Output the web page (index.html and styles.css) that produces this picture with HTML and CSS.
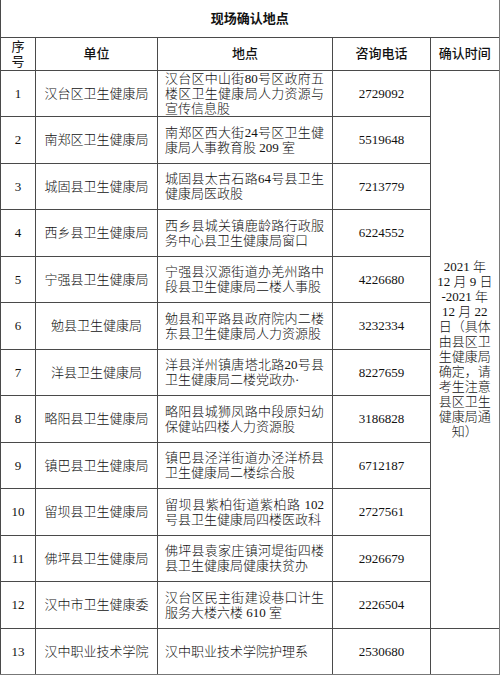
FILE: index.html
```html
<!DOCTYPE html>
<html lang="zh-CN">
<head>
<meta charset="utf-8">
<title>现场确认地点</title>
<link rel="stylesheet" href="styles.css">
</head>
<body>
<table class="sheet">
  <colgroup>
    <col class="c-no">
    <col class="c-unit">
    <col class="c-addr">
    <col class="c-tel">
    <col class="c-time">
  </colgroup>
  <thead>
    <tr class="title-row"><th colspan="5" class="title edge">现场确认地点</th></tr>
    <tr class="head-row">
      <th class="no">序<br>号</th>
      <th>单位</th>
      <th>地点</th>
      <th>咨询电话</th>
      <th class="edge">确认时间</th>
    </tr>
  </thead>
  <tbody>
    <tr>
      <td>1</td>
      <td class="unit">汉台区卫生健康局</td>
      <td class="addr"><span class="line full">汉台区中山街80号区政府五</span><span class="line full">楼区卫生健康局人力资源与</span><span class="line">宣传信息股</span></td>
      <td>2729092</td>
      <td class="time edge" rowspan="12">2021 年<br>12 月 9 日<br>-2021 年<br>12 月 22<br>日（具体<br>由县区卫<br>生健康局<br>确定，请<br>考生注意<br>县区卫生<br>健康局通<br>知）</td>
    </tr>
    <tr>
      <td>2</td>
      <td class="unit">南郑区卫生健康局</td>
      <td class="addr"><span class="line full">南郑区西大街24号区卫生健</span><span class="line">康局人事教育股 209 室</span></td>
      <td>5519648</td>
    </tr>
    <tr>
      <td>3</td>
      <td class="unit">城固县卫生健康局</td>
      <td class="addr"><span class="line full">城固县太古石路64号县卫生</span><span class="line">健康局医政股</span></td>
      <td>7213779</td>
    </tr>
    <tr>
      <td>4</td>
      <td class="unit">西乡县卫生健康局</td>
      <td class="addr"><span class="line full">西乡县城关镇鹿龄路行政服</span><span class="line">务中心县卫生健康局窗口</span></td>
      <td>6224552</td>
    </tr>
    <tr>
      <td>5</td>
      <td class="unit">宁强县卫生健康局</td>
      <td class="addr"><span class="line full">宁强县汉源街道办羌州路中</span><span class="line">段县卫生健康局二楼人事股</span></td>
      <td>4226680</td>
    </tr>
    <tr>
      <td>6</td>
      <td class="unit">勉县卫生健康局</td>
      <td class="addr"><span class="line full">勉县和平路县政府院内二楼</span><span class="line">东县卫生健康局人力资源股</span></td>
      <td>3232334</td>
    </tr>
    <tr>
      <td>7</td>
      <td class="unit">洋县卫生健康局</td>
      <td class="addr"><span class="line full">洋县洋州镇唐塔北路20号县</span><span class="line">卫生健康局二楼党政办·</span></td>
      <td>8227659</td>
    </tr>
    <tr>
      <td>8</td>
      <td class="unit">略阳县卫生健康局</td>
      <td class="addr"><span class="line full">略阳县城狮凤路中段原妇幼</span><span class="line">保健站四楼人力资源股</span></td>
      <td>3186828</td>
    </tr>
    <tr>
      <td>9</td>
      <td class="unit">镇巴县卫生健康局</td>
      <td class="addr"><span class="line full">镇巴县泾洋街道办泾洋桥县</span><span class="line">卫生健康局二楼综合股</span></td>
      <td>6712187</td>
    </tr>
    <tr>
      <td>10</td>
      <td class="unit">留坝县卫生健康局</td>
      <td class="addr"><span class="line full">留坝县紫柏街道紫柏路 102</span><span class="line">号县卫生健康局四楼医政科</span></td>
      <td>2727561</td>
    </tr>
    <tr>
      <td>11</td>
      <td class="unit">佛坪县卫生健康局</td>
      <td class="addr"><span class="line full">佛坪县袁家庄镇河堤街四楼</span><span class="line">县卫生健康局健康扶贫办</span></td>
      <td>2926679</td>
    </tr>
    <tr>
      <td>12</td>
      <td class="unit">汉中市卫生健康委</td>
      <td class="addr"><span class="line full">汉台区民主街建设巷口计生</span><span class="line">服务大楼六楼 610 室</span></td>
      <td>2226504</td>
    </tr>
    <tr class="last-row">
      <td>13</td>
      <td class="unit">汉中职业技术学院</td>
      <td class="addr"><span class="line">汉中职业技术学院护理系</span></td>
      <td>2530680</td>
      <td class="edge"></td>
    </tr>
  </tbody>
</table>
</body>
</html>
```

FILE: styles.css
```css
* {
  box-sizing: border-box;
}

html,
body {
  margin: 0;
  padding: 0;
  background: #ffffff;
}

body {
  font-family: "Liberation Serif", "Noto Sans CJK SC", serif;
  font-size: 13px;
  color: #111111;
}

.sheet {
  border-collapse: collapse;
  table-layout: fixed;
  width: 499px;
}

.c-no { width: 35px; }
.c-unit { width: 122px; }
.c-addr { width: 175px; }
.c-tel { width: 98px; }
.c-time { width: 69px; }

.sheet th,
.sheet td {
  border: 1px solid #4a4a4a;
  padding: 0;
  text-align: center;
  vertical-align: middle;
  line-height: 15px;
  font-weight: 300;
}

.sheet th {
  font-weight: 500;
}

.sheet .edge {
  border-right: 2px solid #7a7a7a;
}

.title-row {
  height: 37px;
}

.sheet .title {
  border-top: none;
  font-weight: 600;
}

.head-row {
  height: 33px;
}

.sheet .no {
  font-weight: 400;
}

tbody tr {
  height: 46.5px;
}

.unit {
  letter-spacing: 0;
}

.sheet .addr {
  text-align: left;
  padding: 0 8px 0 7px;
}

.line {
  display: block;
}

.line.full {
  text-align: justify;
  text-align-last: justify;
}

.time {
  line-height: 15.5px;
  padding: 0 4px;
}

.last-row td {
  border-bottom: 1px solid #777777;
}
```
